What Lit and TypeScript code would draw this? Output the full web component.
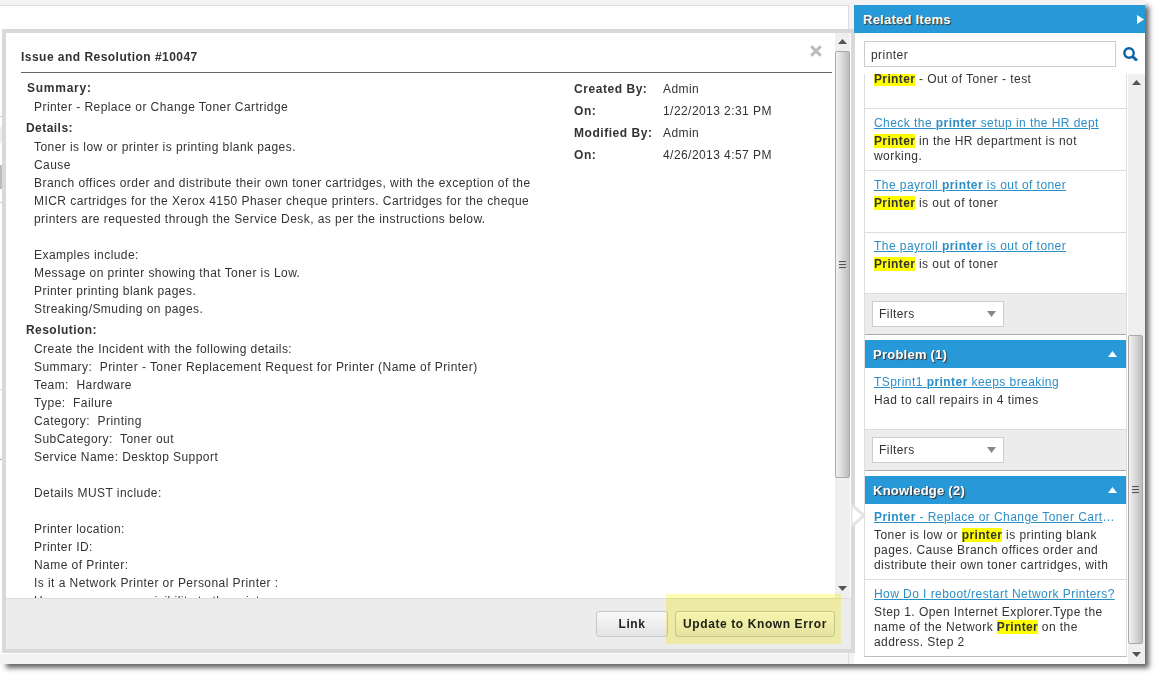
import { LitElement, html, css } from "lit";
import { customElement } from "lit/decorators.js";

const hl = (t: string) => html`<mark>${t}</mark>`;
const arrowUp = html`<svg class="sbarrow" width="9" height="5" viewBox="0 0 9 5"><path d="M4.5 0 9 5H0z" fill="#555"/></svg>`;
const arrowDown = html`<svg class="sbarrow" width="9" height="5" viewBox="0 0 9 5"><path d="M0 0h9L4.5 5z" fill="#555"/></svg>`;
const grip = html`<span class="grip"><i></i><i></i><i></i></span>`;
const filters = html`<div class="filters"><div class="select">Filters <svg width="9" height="6" viewBox="0 0 9 6"><path d="M0 0h9L4.500 6z" fill="#888"/></svg></div></div>`;
const collapse = html`<svg width="9" height="6" viewBox="0 0 9 6"><path d="M4.500 0 9 6H0z" fill="#fff"/></svg>`;

@customElement("app-root")
export class AppRoot extends LitElement {
  static styles = css`
    :host { display: block; width: 1159px; height: 679px; position: relative; overflow: hidden; background: #fff;
      font-family: "Liberation Sans", Arial, sans-serif; font-size: 12px; color: #333; letter-spacing: .44px; }
    * { box-sizing: border-box; }
    .window { width: 1145px; height: 664px; background: #f3f3f3; box-shadow: 5px 5px 5px -1px #666; display: flex; flex-direction: column; position: relative; }
    .window-body { flex: 1; display: flex; padding-top: 5px; }
    .left { width: 849px; margin-right: 5px; border-top: 1px solid #ddd; border-right: 1px solid #ddd;
      background: linear-gradient(to top, #f3f3f3 10px, #fff 10px); }
    .frag { width: 2px; height: 100%;
      background: linear-gradient(to bottom, transparent 110px, #ccc 110px 111px, transparent 111px 121px, #eee 121px 137px, transparent 137px 159px, #bbb 159px 183px, transparent 183px 196px, #ccc 196px 197px, transparent 197px 383px, #ddd 383px 384px, transparent 384px 453px, #aaa 453px 454px, transparent 454px); }
    .panel { flex: 1; display: flex; flex-direction: column; background: #fff; }
    .panel-head { position: relative; z-index: 1; height: 28px; background: #2899d8; color: #fff; font-weight: bold; font-size: 13px; letter-spacing: .24px; display: flex; align-items: center; justify-content: space-between; padding-left: 9px; text-shadow: 1px 1px 1px #333; }
    .panel-head svg { margin-right: 1px; }
    .search { display: flex; align-items: center; padding: 8px 0 7px 10px; gap: 7px; }
    .search .input { width: 252px; height: 26px; border: 1px solid #ccc; padding-left: 6px; line-height: 26px; background: #fff; }
    .panel-main { flex: 1; display: flex; min-height: 0; }
    .list { width: 263px; margin-left: 10px; height: 583px; border-bottom: 1px solid #bbb; border-left: 1px solid #ddd; border-right: 1px solid #ddd; overflow: hidden; line-height: 15px; position: relative; }
    .item { border-bottom: 1px solid #ddd; padding: 5px 9px 0; height: 62px; }
    .item.clipped { height: 35px; padding-top: 0; display: flow-root; }
    .item.clipped div { margin-top: -2px; }
    .item.tight { padding-top: 4px; }
    .item.short { height: 61px; }
    .item.tall { height: 76px; }
    .item.last { height: auto; border: 0; }
    .item a { display: block; color: #2b8ec6; text-decoration: underline; line-height: 18px; white-space: nowrap; overflow: hidden; text-overflow: ellipsis; }
    .item p { margin: 0; padding-top: 2px; }
    mark { background: #ff0; color: #333; font-weight: bold; padding: 0; letter-spacing: .36px; }
    .filters { background: #ececec; padding: 7px 7px 0; border-bottom: 1px solid #aaa; height: 41px; }
    .select { width: 132px; height: 26px; background: #fff; border: 1px solid #ccc; display: flex; align-items: center; justify-content: space-between; padding: 0 7px 0 6px; }
    .section { margin: 5px -1px 0; height: 28px; background: #2899d8; color: #fff; font-weight: bold; font-size: 13px; letter-spacing: .24px; display: flex; align-items: center; justify-content: space-between; padding: 0 10px 0 9px; text-shadow: 1px 1px 1px #333; }
    .sb { background: #efefef; display: flex; flex-direction: column; align-items: center; }
    .sbarrow { flex: none; margin: 6px 0 7px; }
    .thumb { width: 15px; background: linear-gradient(90deg, #f2f2f2, #d8d8d8 50%, #bbb); border: 1px solid #aaa; border-radius: 2px; display: flex; align-items: center; justify-content: center; }
    .grip { display: flex; flex-direction: column; gap: 1px; }
    .grip i { display: block; width: 7px; height: 2px; background: #555; border-bottom: 1px solid #ccc; }
    .panel-sb { flex: 1; margin-left: 1px; }
    .panel-sb .thumb { height: 309px; margin-right: 2px; }
    .panel-sb .spacer { flex: none; height: 243px; }
    .panel-sb .fill, .modal-sb .fill { flex: 1; }
    .modal { position: absolute; left: 2px; top: 29px; width: 853px; height: 624px; background: #fff; border: 4px solid #d9d9d9; display: flex; flex-direction: column; }
    .modal-main { flex: 1; display: flex; min-height: 0; }
    .modal-content { flex: 1; min-width: 0; position: relative; overflow: hidden; padding: 17px 0 0 15px; }
    .title { font-weight: bold; height: 23px; border-bottom: 1px solid #666; line-height: 15px; margin-right: 3px; letter-spacing: .47px; }
    .close { position: absolute; right: 13px; top: 12px; }
    .columns { display: flex; line-height: 18px; padding: 5px 0 0 6px; }
    .col-main { width: 547px; flex: none; }
    .label { font-weight: bold; line-height: 20px; letter-spacing: .75px; }
    .label.l2 { margin-left: -1px; letter-spacing: .45px; }
    .value { padding: 0 0 2px 7px; white-space: pre-wrap; }
    .meta { display: grid; grid-template-columns: 89px auto; grid-auto-rows: 22px; align-content: start; padding-top: 2px; }
    .meta b { font-weight: bold; letter-spacing: .55px; }
    .modal-sb { width: 15px; margin-right: 1px; }
    .modal-sb .thumb { height: 427px; }
    .modal-foot { height: 51px; flex: none; background: #ececec; border-top: 1px solid #ddd; display: flex; justify-content: flex-end; align-items: center; gap: 7px; padding-right: 16px; }
    .btn { height: 26px; border: 1px solid #c8c8c8; border-radius: 3px; background: linear-gradient(#f8f8f8, #e4e4e4); font-weight: bold; letter-spacing: .6px; color: #222; display: flex; align-items: center; justify-content: center; }
    .btn.link { width: 72px; }
    .btn.update { width: 160px; }
    .spot { position: absolute; left: 666px; top: 594px; width: 175px; height: 50px; background: rgb(255, 253, 178); mix-blend-mode: multiply; }
    .tip { position: absolute; left: 851px; top: 504px; width: 15px; height: 23px; }
  `;

  render() {
    return html`
      <div class="window">
        <div class="window-body">
          <div class="left"><div class="frag"></div></div>
          <div class="panel">
            <div class="panel-head">Related Items
              <svg width="7" height="9" viewBox="0 0 7 9"><path d="M0 0l7 4.5L0 9z" fill="#fff"/></svg>
            </div>
            <div class="search">
              <div class="input">printer</div>
              <svg width="15" height="14" viewBox="0 0 15 14"><circle cx="6" cy="6" r="4.700" fill="none" stroke="#0b63a8" stroke-width="2.400"/><path d="M9.500 9.500 14 13.500" stroke="#0b63a8" stroke-width="3"/></svg>
            </div>
            <div class="panel-main">
              <div class="list">
                <div class="item clipped"><div>${hl("Printer")} - Out of Toner - test</div></div>
                <div class="item"><a>Check the <b>printer</b> setup in the HR dept</a><p>${hl("Printer")} in the HR department is not working.</p></div>
                <div class="item"><a>The payroll <b>printer</b> is out of toner</a><p>${hl("Printer")} is out of toner</p></div>
                <div class="item short tight"><a>The payroll <b>printer</b> is out of toner</a><p>${hl("Printer")} is out of toner</p></div>
                ${filters}
                <div class="section">Problem (1) ${collapse}</div>
                <div class="item"><a>TSprint1 <b>printer</b> keeps breaking</a><p>Had to call repairs in 4 times</p></div>
                ${filters}
                <div class="section">Knowledge (2) ${collapse}</div>
                <div class="item tall tight"><a><b>Printer</b> - Replace or Change Toner Cartridge</a><p>Toner is low or ${hl("printer")} is printing blank pages. Cause Branch offices order and distribute their own toner cartridges, with</p></div>
                <div class="item last"><a>How Do I reboot/restart Network Printers?</a><p>Step 1. Open Internet Explorer.Type the name of the Network ${hl("Printer")} on the address. Step 2</p></div>
              </div>
              <div class="sb panel-sb">
                ${arrowUp}
                <div class="spacer"></div>
                <div class="thumb">${grip}</div>
                <div class="fill"></div>
                ${arrowDown}
              </div>
            </div>
          </div>
        </div>
        <div class="modal">
          <div class="modal-main">
            <div class="modal-content">
              <div class="title">Issue and Resolution #10047</div>
              <svg class="close" width="12" height="12" viewBox="0 0 12 12"><path d="M1.200 1.200l9.600 9.600M10.800 1.200l-9.600 9.600" stroke="#bbb" stroke-width="3"/></svg>
              <div class="columns">
                <div class="col-main">
                  <div class="label">Summary:</div>
                  <div class="value">Printer - Replace or Change Toner Cartridge</div>
                  <div class="label l2">Details:</div>
                  <div class="value">Toner is low or printer is printing blank pages.
Cause
Branch offices order and distribute their own toner cartridges, with the exception of the
MICR cartridges for the Xerox 4150 Phaser cheque printers. Cartridges for the cheque
printers are requested through the Service Desk, as per the instructions below.
&nbsp;
Examples include:
Message on printer showing that Toner is Low.
Printer printing blank pages.
Streaking/Smuding on pages.</div>
                  <div class="label l2">Resolution:</div>
                  <div class="value">Create the Incident with the following details:
Summary:  Printer - Toner Replacement Request for Printer (Name of Printer)
Team:  Hardware
Type:  Failure
Category:  Printing
SubCategory:  Toner out
Service Name: Desktop Support
&nbsp;
Details MUST include:
&nbsp;
Printer location:
Printer ID:
Name of Printer:
Is it a Network Printer or Personal Printer :
Has user access or visibility to the printer</div>
                </div>
                <div class="meta">
                  <b>Created By:</b><span>Admin</span>
                  <b>On:</b><span>1/22/2013 2:31 PM</span>
                  <b>Modified By:</b><span>Admin</span>
                  <b>On:</b><span>4/26/2013 4:57 PM</span>
                </div>
              </div>
            </div>
            <div class="sb modal-sb">
              ${arrowUp}
              <div class="thumb">${grip}</div>
              <div class="fill"></div>
              ${arrowDown}
            </div>
          </div>
          <div class="modal-foot">
            <div class="btn link">Link</div>
            <div class="btn update">Update to Known Error</div>
          </div>
        </div>
        <div class="spot"></div>
        <svg class="tip" viewBox="0 0 15 23"><path d="M0 0l13 11.500L0 23z" fill="#fff" stroke="#e4e4e4" stroke-width="3"/></svg>
      </div>
    `;
  }
}
